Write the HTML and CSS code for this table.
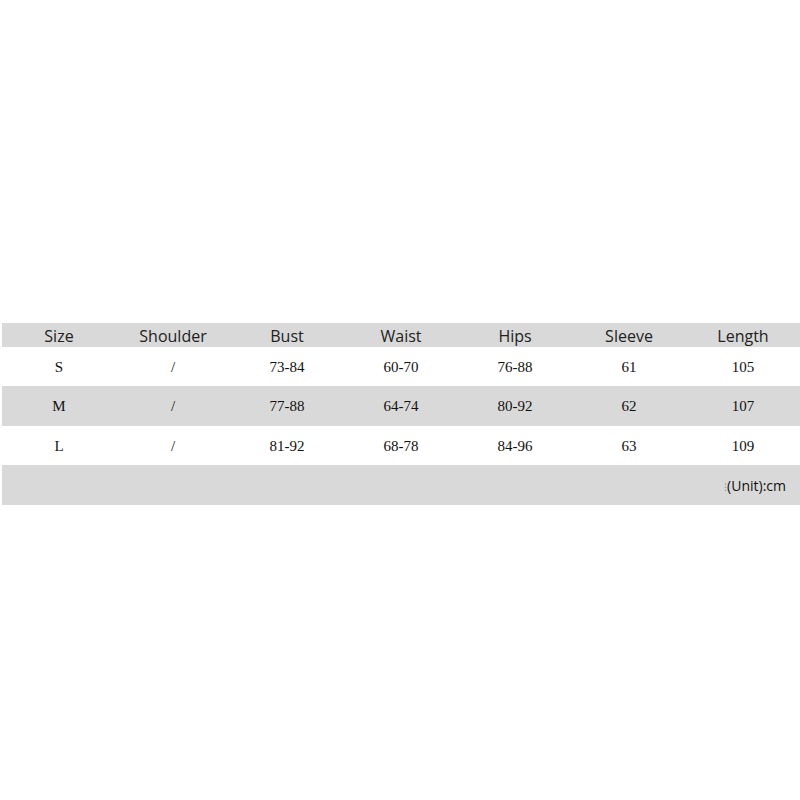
FILE: index.html
```html
<!DOCTYPE html>
<html>
<head>
<meta charset="utf-8">
<link rel="stylesheet" href="styles.css">
</head>
<body>
<div class="chart">
  <div class="row head">
    <div class="cell">Size</div><div class="cell">Shoulder</div><div class="cell">Bust</div><div class="cell">Waist</div><div class="cell">Hips</div><div class="cell">Sleeve</div><div class="cell">Length</div>
  </div>
  <div class="row data">
    <div class="cell">S</div><div class="cell">/</div><div class="cell">73-84</div><div class="cell">60-70</div><div class="cell">76-88</div><div class="cell">61</div><div class="cell">105</div>
  </div>
  <div class="row data shade">
    <div class="cell">M</div><div class="cell">/</div><div class="cell">77-88</div><div class="cell">64-74</div><div class="cell">80-92</div><div class="cell">62</div><div class="cell">107</div>
  </div>
  <div class="row data">
    <div class="cell">L</div><div class="cell">/</div><div class="cell">81-92</div><div class="cell">68-78</div><div class="cell">84-96</div><div class="cell">63</div><div class="cell">109</div>
  </div>
  <div class="row unit shade">
    <div class="unit-text"><span class="mark">⁝</span>(Unit):cm</div>
  </div>
</div>
</body>
</html>
```
FILE: styles.css
```css
html, body {
  margin: 0;
  padding: 0;
  background: #ffffff;
  width: 800px;
  height: 800px;
  overflow: hidden;
}
.chart {
  padding-top: 323px;
  padding-left: 2px;
}
.row {
  display: grid;
  grid-template-columns: repeat(7, 1fr);
  align-items: center;
}
.head {
  height: 24px;
  background: #d9d9d9;
  font-family: "Open Sans", "Liberation Sans", sans-serif;
  font-size: 16px;
  color: #222;
}
.data {
  height: 39px;
  font-family: "Liberation Serif", serif;
  font-size: 15px;
  color: #111;
}
.shade {
  background: #d9d9d9;
}
.data.shade {
  height: 40px;
}
.cell {
  text-align: center;
  line-height: 20px;
}
.head .cell {
  line-height: 24px;
  padding-top: 1px;
}
.unit {
  height: 40px;
  display: flex;
  justify-content: flex-end;
}
.unit-text {
  font-family: "Open Sans", "Liberation Sans", sans-serif;
  font-size: 14px;
  color: #111;
  padding-right: 14px;
}
.mark {
  color: #999;
  font-size: 11px;
}
```
